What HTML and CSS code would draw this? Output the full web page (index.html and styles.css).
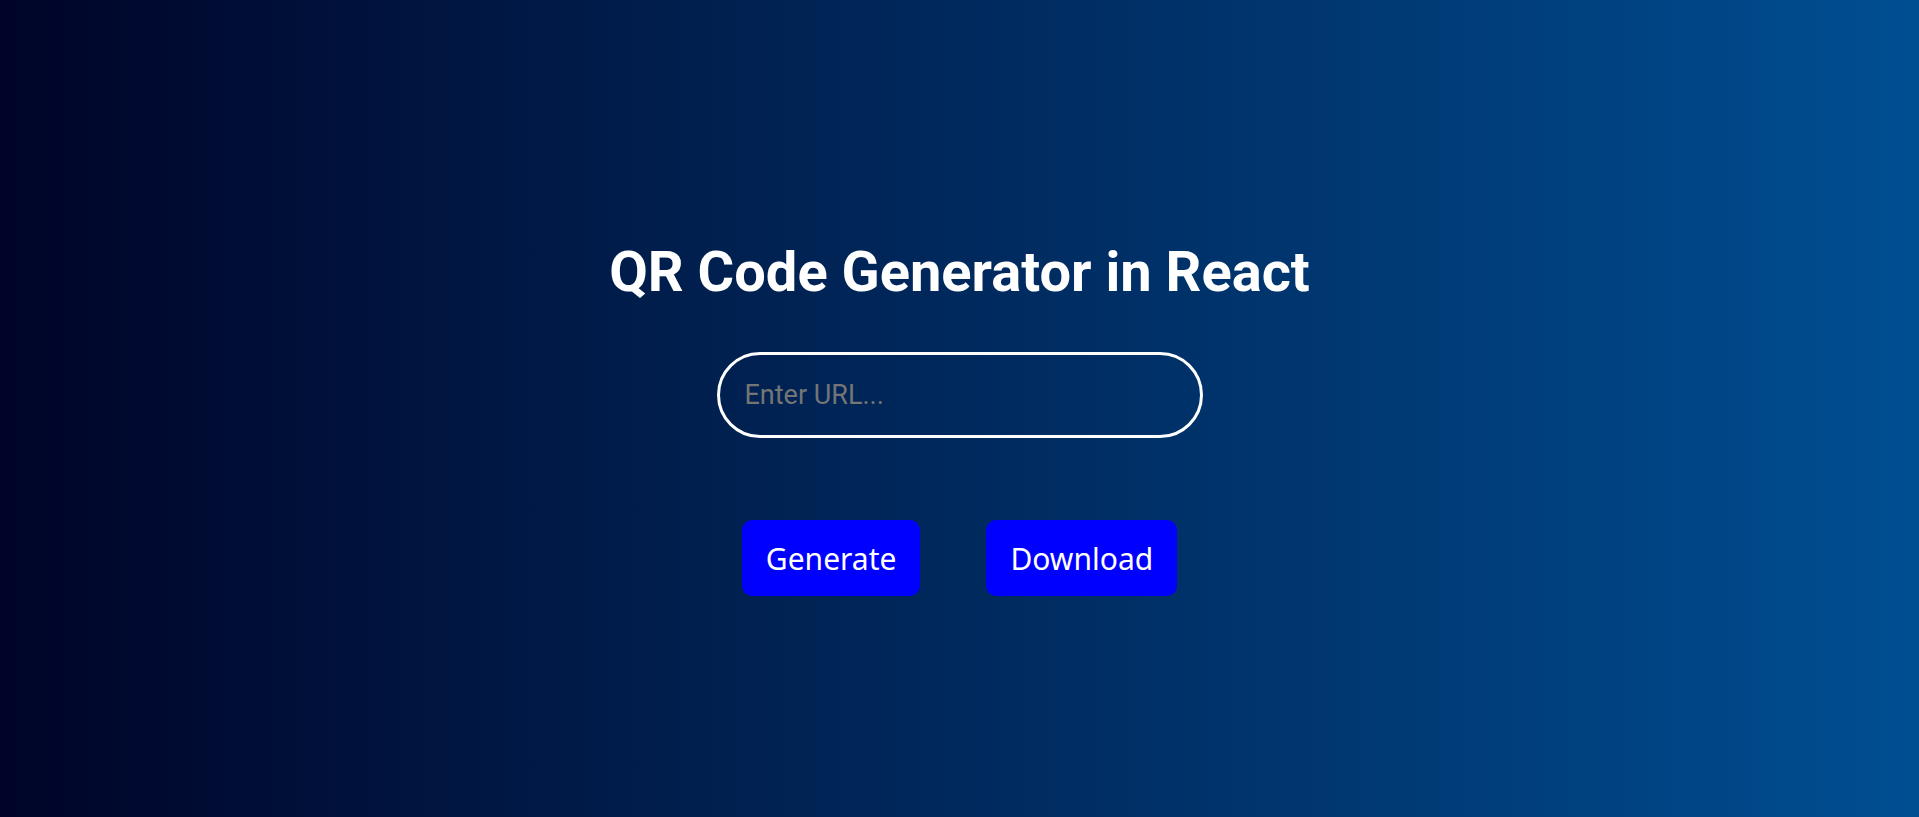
FILE: index.html
```html
<!DOCTYPE html>
<html lang="en">
<head>
<meta charset="utf-8">
<title>QR Code Generator in React</title>
<link rel="stylesheet" href="styles.css">
</head>
<body>
<main class="app">
  <h1 class="title">QR Code Generator in React</h1>
  <input class="url-input" type="text" placeholder="Enter URL...">
  <div class="actions">
    <button class="btn">Generate</button>
    <button class="btn">Download</button>
  </div>
</main>
</body>
</html>
```

FILE: styles.css
```css
html, body {
  margin: 0;
  padding: 0;
  height: 100%;
}

body {
  background: linear-gradient(to right, #000428, #004e92);
  font-family: Roboto, "Liberation Sans", sans-serif;
}

.app {
  min-height: 100vh;
  box-sizing: border-box;
  display: flex;
  flex-direction: column;
  align-items: center;
  padding-top: 240px;
}

.title {
  margin: 0;
  color: #ffffff;
  font-family: Roboto, sans-serif;
  font-weight: 700;
  font-size: 56px;
  line-height: 64px;
}

.url-input {
  margin-top: 48px;
  width: 486px;
  height: 86px;
  box-sizing: border-box;
  border: 3px solid #ffffff;
  border-radius: 43px;
  background: transparent;
  padding: 0 25px;
  font-family: Roboto, sans-serif;
  font-size: 27px;
  color: #ffffff;
  outline: none;
}

.url-input::placeholder {
  color: #757575;
}

.actions {
  margin-top: 82px;
  display: flex;
  gap: 66px;
}

.btn {
  height: 76px;
  padding: 0 24px;
  border: none;
  border-radius: 10px;
  background: #0000ff;
  color: #ffffff;
  font-family: "Noto Sans", "Open Sans", sans-serif;
  font-size: 30px;
  cursor: pointer;
}
```
